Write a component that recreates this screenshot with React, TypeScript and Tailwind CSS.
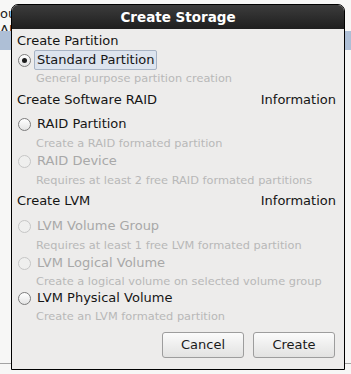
import React from "react";

type Opt = {
  label: string;
  hint: string;
  enabled?: boolean;
  checked?: boolean;
  focused?: boolean;
  rowH: string;
  hintH: string;
};

function Radio({ enabled, checked }: { enabled?: boolean; checked?: boolean }) {
  return (
    <span
      className={
        "flex h-[13px] w-[13px] shrink-0 items-center justify-center rounded-full border " +
        (enabled
          ? "border-[#7d7d7d] bg-gradient-to-b from-white to-[#e4e4e4]"
          : "border-[#c6c6c6] bg-[#efefee]")
      }
    >
      {checked && <span className="h-[5px] w-[5px] rounded-full bg-[#1c1c1c]" />}
    </span>
  );
}

function Option({ o }: { o: Opt }) {
  return (
    <>
      <div className={"flex items-center pl-[1px] " + o.rowH}>
        <Radio enabled={o.enabled} checked={o.checked} />
        <span
          className={
            "ml-[3px] px-[2px] leading-[18px] text-[13px] " +
            (o.focused ? "rounded-[2px] border border-[#a7b3c4] bg-[#dde4ee] " : "border border-transparent ") +
            (o.enabled ? "text-[#161616]" : "text-[#a8a8a8]")
          }
        >
          {o.label}
        </span>
      </div>
      <div className={"flex items-center pl-[19px] text-[11.35px] text-[#b8b8b8] " + o.hintH}>{o.hint}</div>
    </>
  );
}

function Header({ title, info, h }: { title: string; info?: string; h: string }) {
  return (
    <div className={"flex items-center justify-between pr-[8px] text-[13px] text-[#141414] " + h}>
      <span>{title}</span>
      {info && <span>{info}</span>}
    </div>
  );
}

export default function App() {
  return (
    <div
      className="relative h-[374px] w-[351px] overflow-hidden bg-[#f7f7f6]"
      style={{ fontFamily: '"DejaVu Sans", Verdana, sans-serif' }}
    >
      {/* window behind the dialog */}
      <span className="absolute left-0 top-[4px] text-[13px] text-[#222]">ou</span>
      <span className="absolute left-0 top-[20px] text-[13px] text-[#222]">AID</span>
      <div className="absolute left-0 top-[31px] h-[19px] w-full bg-[#aebfd6]" />
      <div className="absolute left-0 top-[363px] h-px w-full bg-[#a3a3a3]" />

      <div className="absolute left-[11px] top-[4px] flex h-[366px] w-[334px] flex-col overflow-hidden rounded-t-[7px] border border-black bg-[#edeceb]">
        <div className="flex h-[24px] shrink-0 items-center justify-center bg-gradient-to-b from-[#3c3c3c] to-[#1f1f1f] text-[13.5px] font-bold text-white">
          Create Storage
        </div>
        <div className="flex flex-1 flex-col pl-[5px] pt-[2px]">
          <Header title="Create Partition" h="h-[20px]" />
          <Option
            o={{
              label: "Standard Partition",
              hint: "General purpose partition creation",
              enabled: true,
              checked: true,
              focused: true,
              rowH: "h-[18px]",
              hintH: "h-[20px]",
            }}
          />
          <Header title="Create Software RAID" info="Information" h="h-[22px]" />
          <Option
            o={{
              label: "RAID Partition",
              hint: "Create a RAID formated partition",
              enabled: true,
              rowH: "h-[26px]",
              hintH: "h-[12px]",
            }}
          />
          <Option
            o={{
              label: "RAID Device",
              hint: "Requires at least 2 free RAID formated partitions",
              rowH: "h-[24px]",
              hintH: "h-[14px]",
            }}
          />
          <Header title="Create LVM" info="Information" h="h-[28px]" />
          <Option
            o={{
              label: "LVM Volume Group",
              hint: "Requires at least 1 free LVM formated partition",
              rowH: "h-[22px]",
              hintH: "h-[16px]",
            }}
          />
          <Option
            o={{
              label: "LVM Logical Volume",
              hint: "Create a logical volume on selected volume group",
              rowH: "h-[20px]",
              hintH: "h-[18px]",
            }}
          />
          <Option
            o={{
              label: "LVM Physical Volume",
              hint: "Create an LVM formated partition",
              enabled: true,
              rowH: "h-[14px]",
              hintH: "h-[24px]",
            }}
          />
          <div className="mt-[3px] flex justify-end gap-[9px] pr-[9px]">
            <button className="h-[26px] w-[82px] rounded-[3px] border border-[#9d9d9d] bg-gradient-to-b from-[#fbfbfb] to-[#e2e2e1] text-[13px] text-[#1a1a1a]">
              Cancel
            </button>
            <button className="h-[26px] w-[82px] rounded-[3px] border border-[#9d9d9d] bg-gradient-to-b from-[#fbfbfb] to-[#e2e2e1] text-[13px] text-[#1a1a1a]">
              Create
            </button>
          </div>
        </div>
      </div>
    </div>
  );
}
